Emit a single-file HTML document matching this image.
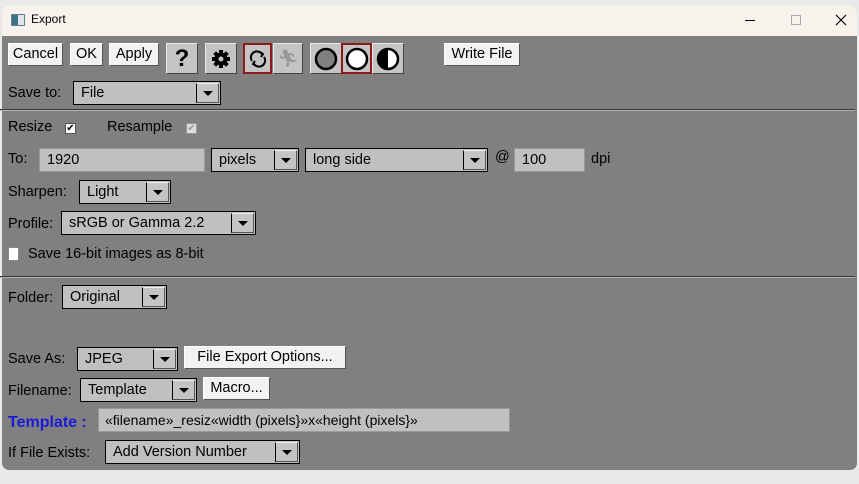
<!DOCTYPE html>
<html><head><style>
*{box-sizing:border-box}
body{margin:0;width:859px;height:484px;background:#e9e9e9;font-family:"Liberation Sans",sans-serif;font-size:14.5px;position:relative;overflow:hidden}
.a{position:absolute}
.win{left:2px;top:5px;width:855px;height:465px;background:#808080;border-radius:7px;overflow:hidden}
.title{left:0;top:0;width:855px;height:31px;background:#f7f3ec}
.btn{position:absolute;background:#f2f2f2;border:1px solid #fff;border-right-color:#555;border-bottom-color:#555;height:23px;line-height:21px;text-align:center;color:#000}
.ib{position:absolute;background:#c4c4c4;border:1px solid #e8e8e8;border-right-color:#444;border-bottom-color:#444;height:31px;display:flex;align-items:center;justify-content:center}
.sel{position:absolute;background:#c0c0c0;border:1px solid #000;height:24px;line-height:23px;padding-left:7px;color:#000}
.sel .ar{position:absolute;right:1px;top:1px;width:23px;height:20px;background:#c4c4c4;border:1px solid #eee;border-left:1px solid #000;border-right-color:#555;border-bottom-color:#555}
.sel .ar:after{content:"";position:absolute;left:6px;top:7px;border-left:5px solid transparent;border-right:5px solid transparent;border-top:5px solid #000}
.inp{position:absolute;background:#c0c0c0;border:1px solid #9a9a9a;height:24px;line-height:23px;padding-left:7px}
.lb{position:absolute;color:#000;line-height:16px}
.sep{position:absolute;left:0;width:855px;height:2px;border-top:1px solid #3c3c3c;border-bottom:1px solid #b0b0b0}
.cb{position:absolute;width:11px;height:11px;background:#fff;border:1px solid #555;font-size:10px;line-height:9px;text-align:center}
</style></head><body>
<div class="a win">
 <div class="a title">
  <div class="a" style="left:9px;top:9px;width:14px;height:12px;border:1px solid #6a7a88;background:linear-gradient(90deg,#3b6f8a 50%,#dfe6ea 50%)"></div>
  <div class="a" style="left:29px;top:7px;font-family:'Liberation Sans',sans-serif;font-size:12px;color:#000">Export</div>
  <div class="a" style="left:743px;top:15px;width:10px;height:1px;background:#000"></div>
  <div class="a" style="left:789px;top:10px;width:10px;height:10px;border:1px solid #aaa"></div>
  <svg class="a" style="left:833px;top:9px" width="12" height="12"><path d="M1 1L11 11M11 1L1 11" stroke="#000" stroke-width="1.2"/></svg>
 </div>
</div>
<div class="btn" style="left:8px;top:43px;width:55px">Cancel</div>
<div class="btn" style="left:70px;top:43px;width:33px">OK</div>
<div class="btn" style="left:109px;top:43px;width:50px">Apply</div>
<div class="ib" style="left:166px;top:43px;width:32px;font-size:24px;font-weight:bold;font-family:'Liberation Sans',sans-serif">?</div>
<div class="ib" style="left:205px;top:43px;width:32px"><svg width="20" height="20" viewBox="0 0 20 20"><g fill="#000"><circle cx="10" cy="10" r="6.5"/><rect x="8" y="1" width="4" height="18"/><rect x="1" y="8" width="18" height="4"/><rect x="8" y="1" width="4" height="18" transform="rotate(45 10 10)"/><rect x="8" y="1" width="4" height="18" transform="rotate(-45 10 10)"/></g><circle cx="10" cy="10" r="2.5" fill="#c4c4c4"/></svg></div>
<div class="ib" style="left:243px;top:43px;width:29px;border:2px solid #8b1a1a"><svg width="20" height="20" viewBox="0 0 20 20" fill="none" stroke="#000" stroke-width="2"><path d="M4 12A6 6 0 0 1 14 5"/><path d="M16 8A6 6 0 0 1 6 15"/><path d="M12 3l3 2-2 3" /><path d="M8 17l-3-2 2-3"/></svg></div>
<div class="ib" style="left:273px;top:43px;width:30px;color:#999;font-size:17px">🏃︎</div>
<div class="ib" style="left:310px;top:43px;width:32px"><svg width="24" height="24"><circle cx="12" cy="12" r="10" fill="#808080" stroke="#000" stroke-width="2.5"/></svg></div>
<div class="ib" style="left:341px;top:43px;width:31px;border:2px solid #8b1a1a"><svg width="24" height="24"><circle cx="12" cy="12" r="10" fill="#fff" stroke="#000" stroke-width="2.5"/></svg></div>
<div class="ib" style="left:372px;top:43px;width:32px"><svg width="24" height="24"><circle cx="12" cy="12" r="10" fill="#fff" stroke="#000" stroke-width="2.5"/><path d="M12 2A10 10 0 0 0 12 22Z" fill="#000"/></svg></div>
<div class="btn" style="left:444px;top:43px;width:76px">Write File</div>

<div class="lb" style="left:8px;top:85px">Save to:</div>
<div class="sel" style="left:73px;top:81px;width:148px">File<div class="ar"></div></div>
<div class="sep" style="top:109px"></div>

<div class="lb" style="left:8px;top:119px">Resize</div>
<div class="cb" style="left:65px;top:123px">✔</div>
<div class="lb" style="left:107px;top:119px">Resample</div>
<div class="cb" style="left:186px;top:123px;background:#ddd;border-color:#999;color:#999">✔</div>

<div class="lb" style="left:8px;top:151px">To:</div>
<div class="inp" style="left:39px;top:148px;width:166px">1920</div>
<div class="sel" style="left:211px;top:148px;width:88px">pixels<div class="ar"></div></div>
<div class="sel" style="left:305px;top:148px;width:183px">long side<div class="ar"></div></div>
<div class="lb" style="left:495px;top:149px">@</div>
<div class="inp" style="left:514px;top:148px;width:71px">100</div>
<div class="lb" style="left:591px;top:151px">dpi</div>

<div class="lb" style="left:8px;top:184px">Sharpen:</div>
<div class="sel" style="left:79px;top:180px;width:92px">Light<div class="ar"></div></div>
<div class="lb" style="left:8px;top:216px">Profile:</div>
<div class="sel" style="left:61px;top:211px;width:195px">sRGB or Gamma 2.2<div class="ar"></div></div>
<div class="cb" style="left:8px;top:247px;width:11px;height:14px;border-color:#888"></div>
<div class="lb" style="left:28px;top:246px">Save 16-bit images as 8-bit</div>
<div class="sep" style="top:276px"></div>

<div class="lb" style="left:8px;top:290px">Folder:</div>
<div class="sel" style="left:62px;top:285px;width:105px">Original<div class="ar"></div></div>

<div class="lb" style="left:8px;top:351px">Save As:</div>
<div class="sel" style="left:77px;top:347px;width:101px">JPEG<div class="ar"></div></div>
<div class="btn" style="left:184px;top:346px;width:162px">File Export Options...</div>
<div class="lb" style="left:8px;top:383px">Filename:</div>
<div class="sel" style="left:80px;top:378px;width:117px">Template<div class="ar"></div></div>
<div class="btn" style="left:203px;top:377px;width:67px">Macro...</div>
<div class="lb" style="left:8px;top:415px;color:#1a1ad6;font-weight:bold;font-size:16px">Template :</div>
<div class="inp" style="left:98px;top:408px;width:412px;font-size:14px;padding-left:6px">«filename»_resiz«width (pixels}»x«height (pixels}»</div>
<div class="lb" style="left:8px;top:445px">If File Exists:</div>
<div class="sel" style="left:105px;top:440px;width:195px">Add Version Number<div class="ar"></div></div>
</body></html>
